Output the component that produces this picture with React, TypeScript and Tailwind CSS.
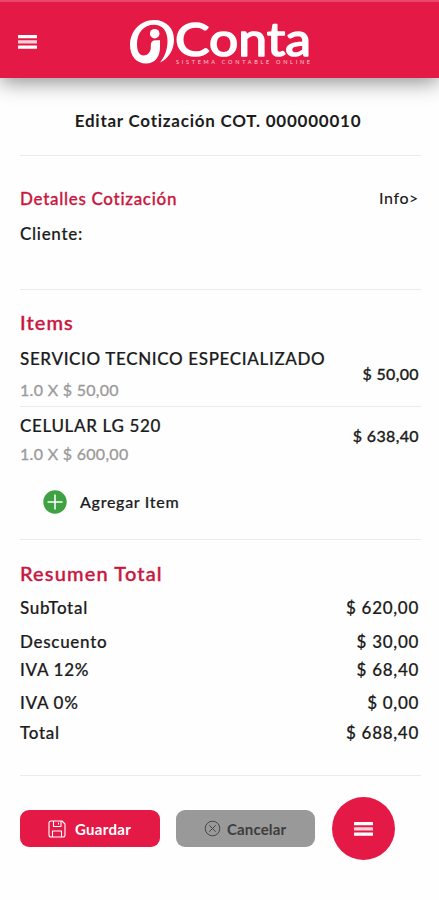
import React from 'react';

interface Item {
  name: string;
  detail: string;
  price: string;
  rowClass: string;
  gapClass: string;
  priceClass: string;
}

const items: Item[] = [
  {
    name: 'SERVICIO TECNICO ESPECIALIZADO',
    detail: '1.0 X $ 50,00',
    price: '$ 50,00',
    rowClass: 'h-[72px] pt-[13px]',
    gapClass: 'mt-[7px]',
    priceClass: 'mt-[15px]',
  },
  {
    name: 'CELULAR LG 520',
    detail: '1.0 X $ 600,00',
    price: '$ 638,40',
    rowClass: 'h-[60px] pt-[7px]',
    gapClass: 'mt-1',
    priceClass: 'mt-[10px]',
  },
];

const totals = [
  { label: 'SubTotal', value: '$ 620,00', rowClass: 'mt-[11px]' },
  { label: 'Descuento', value: '$ 30,00', rowClass: 'mt-[10px]' },
  { label: 'IVA 12%', value: '$ 68,40', rowClass: 'mt-1' },
  { label: 'IVA 0%', value: '$ 0,00', rowClass: 'mt-[9px]' },
  { label: 'Total', value: '$ 688,40', rowClass: 'mt-[6px]' },
];

const MenuIcon = () => (
  <svg width="19" height="14" viewBox="0 0 19 14" fill="#fff">
    <rect width="19" height="3.2" y="0" rx="0.5" />
    <rect width="19" height="3.2" y="5.3" rx="0.5" opacity="0.8" />
    <rect width="19" height="3.2" y="10.6" rx="0.5" />
  </svg>
);

const Logo = () => (
  <svg width="184" height="66" viewBox="0 -14 184 66" className="font-['Lato',sans-serif]" fill="#fff">
    {/* ring with a tail on the right side */}
    <path d="M16 45.5 C6 45.5 0 37.5 0 27 C0 13 10.500 2 24 2 C36 2 44 10 44 21.5 C44 32.500 38 41 30 44.5 C34.500 39 37.500 32 37.5 23 C37.5 13 32.500 6.8 24 6.8 C13.500 6.8 7 15 7 26 C7 33.500 9.500 37.5 13.5 37.5 C17.500 37.5 20.800 34 20.8 29.5 L20.8 27 C20.8 23.800 22.500 22.200 25.5 22.2 L30 22.2 L30 29 C30 39 25 45.500 16 45.5 Z" />
    <circle cx="24.7" cy="15.7" r="4.8" />
    <text x="45" y="38" fontSize="47" fontWeight="400" textLength="136" lengthAdjust="spacingAndGlyphs" stroke="#fff" strokeWidth="1.6" strokeLinejoin="round">Conta</text>
    <text x="46" y="46" fontSize="5.5" textLength="134" fontWeight="400" opacity="0.75">SISTEMA CONTABLE ONLINE</text>
  </svg>
);

const SaveIcon = () => (
  <svg width="18" height="18" viewBox="0 0 18 18" fill="none" stroke="#fff" strokeWidth="1.1" strokeLinejoin="round">
    <path d="M3 1h11l3 3v11a2 2 0 0 1-2 2H3a2 2 0 0 1-2-2V3a2 2 0 0 1 2-2z" />
    <path d="M5.500 1v5.500h7.500V1M10.500 2.500v2M4.500 17v-6h9v6" />
  </svg>
);

const CancelIcon = () => (
  <svg width="17" height="17" viewBox="0 0 17 17" fill="none" stroke="#444" strokeWidth="1">
    <circle cx="8.5" cy="8.5" r="7.3" />
    <path d="M5.300 5.300l6.400 6.400M11.700 5.300l-6.400 6.400" />
  </svg>
);

const AddIcon = () => (
  <svg width="24" height="24" viewBox="0 0 24 24">
    <circle cx="12" cy="12" r="11.7" fill="#3fa142" />
    <path d="M12 4.500v15M4.500 12h15" stroke="#fff" strokeWidth="1.5" />
  </svg>
);

const Divider = () => <div className="h-px w-[401px] shrink-0 bg-[#ebebeb]" />;

export default function App() {
  return (
    <div className="flex h-[900px] w-[439px] flex-col overflow-hidden bg-[#fefefe] font-['Lato',sans-serif] text-[#1c1c1c]">
      <header className="flex h-[78px] shrink-0 items-start border-t-2 border-[#e8476b] bg-[#e51946] pl-[18px] shadow-[0_4px_20px_rgba(0,0,0,0.45)]">
        <button className="mt-[33px]">
          <MenuIcon />
        </button>
        <div className="mt-[2px] ml-[93px]">
          <Logo />
        </div>
      </header>

      <main className="flex flex-col px-5 leading-6">
        <h1 className="h-[77px] pt-[31px] pr-[3px] text-center text-[17px] font-bold tracking-[0.75px]">
          Editar Cotización COT. 000000010
        </h1>
        <Divider />

        <section className="h-[133px] pt-[31px]">
          <div className="flex justify-between">
            <h2 className="text-[17px] font-medium tracking-[0.7px] text-[#c9173f] [-webkit-text-stroke:0.3px]">Detalles Cotización</h2>
            <a className="-mt-px text-[16px] font-medium tracking-[0.6px]">Info&gt;</a>
          </div>
          <p className="mt-[11px] text-[17px] font-medium tracking-[0.7px] [-webkit-text-stroke:0.2px]">Cliente:</p>
        </section>
        <Divider />

        <section className="pt-5">
          <h2 className="text-[20px] font-medium tracking-[1.1px] text-[#c9173f] [-webkit-text-stroke:0.4px]">Items</h2>
          {items.map((item, i) => (
            <React.Fragment key={item.name}>
              {i > 0 && <Divider />}
              <div className={`flex justify-between ${item.rowClass}`}>
                <div>
                  <p className="text-[17px] font-medium tracking-[0.65px] [-webkit-text-stroke:0.2px]">{item.name}</p>
                  <p className={`text-[16px] tracking-[0.3px] text-[#999] [-webkit-text-stroke:0.3px] ${item.gapClass}`}>{item.detail}</p>
                </div>
                <span className={`text-[16px] font-medium tracking-[0.35px] [-webkit-text-stroke:0.3px] ${item.priceClass}`}>{item.price}</span>
              </div>
            </React.Fragment>
          ))}
          <button className="mt-[23px] mb-[25px] ml-[23px] flex h-6 items-center gap-[13px] text-[16px] font-medium tracking-[0.7px] [-webkit-text-stroke:0.2px]">
            <AddIcon />
            Agregar Item
          </button>
        </section>
        <Divider />

        <section className="h-[235px] pt-[21px]">
          <h2 className="text-[20px] font-medium tracking-[1.15px] text-[#c9173f] [-webkit-text-stroke:0.4px]">Resumen Total</h2>
          {totals.map((row) => (
            <div key={row.label} className={`flex justify-between text-[17px] font-medium tracking-[0.7px] [-webkit-text-stroke:0.2px] ${row.rowClass}`}>
              <span>{row.label}</span>
              <span>{row.value}</span>
            </div>
          ))}
        </section>
        <Divider />

        <div className="mt-[21px] flex h-[63px] items-center">
          <button className="flex h-[37px] w-[140px] items-center rounded-[9px] bg-[#e51946] pl-7 text-[15px] font-bold tracking-[0.3px] text-white">
            <SaveIcon />
            <span className="ml-[9px]">Guardar</span>
          </button>
          <button className="ml-4 flex h-[37px] w-[139px] items-center rounded-[9px] bg-[#999] pl-7 text-[15px] font-bold tracking-[0.15px] text-[#3d3d3d]">
            <CancelIcon />
            <span className="ml-[6px]">Cancelar</span>
          </button>
          <button className="ml-[17px] flex size-[63px] items-center justify-center rounded-full bg-[#e51946]">
            <MenuIcon />
          </button>
        </div>
      </main>
    </div>
  );
}
